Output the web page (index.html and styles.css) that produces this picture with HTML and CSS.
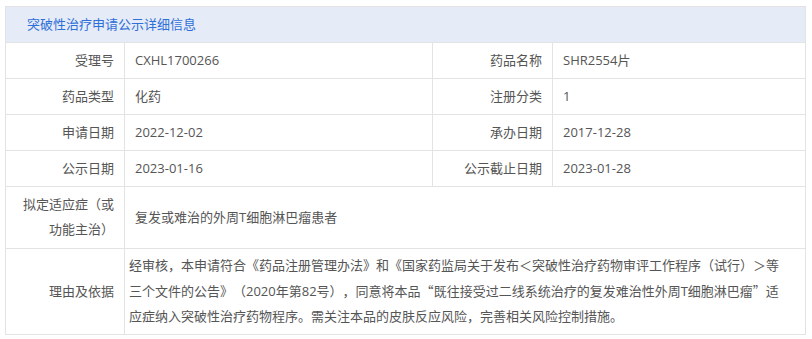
FILE: index.html
```html
<!DOCTYPE html>
<html lang="zh-CN">
<head>
<meta charset="utf-8">
<title>突破性治疗申请公示详细信息</title>
<link rel="stylesheet" href="styles.css">
</head>
<body>
<div class="wrap">
<table class="info">
  <colgroup>
    <col class="c-label"><col class="c-val"><col class="c-label2"><col class="c-val2">
  </colgroup>
  <tr class="head"><th colspan="4">突破性治疗申请公示详细信息</th></tr>
  <tr><td class="lbl">受理号</td><td>CXHL1700266</td><td class="lbl">药品名称</td><td>SHR2554片</td></tr>
  <tr><td class="lbl">药品类型</td><td>化药</td><td class="lbl">注册分类</td><td>1</td></tr>
  <tr><td class="lbl">申请日期</td><td>2022-12-02</td><td class="lbl">承办日期</td><td>2017-12-28</td></tr>
  <tr><td class="lbl">公示日期</td><td>2023-01-16</td><td class="lbl">公示截止日期</td><td>2023-01-28</td></tr>
  <tr class="tall"><td class="lbl">拟定适应症（或功能主治）</td><td colspan="3">复发或难治的外周T细胞淋巴瘤患者</td></tr>
  <tr><td class="lbl">理由及依据</td><td colspan="3" class="long">经审核，本申请符合《药品注册管理办法》和《国家药监局关于发布＜突破性治疗药物审评工作程序（试行）＞等三个文件的公告》（2020年第82号），同意将本品<span class="cjk">“</span>既往接受过二线系统治疗的复发难治性外周T细胞淋巴瘤<span class="cjk">”</span>适应症纳入突破性治疗药物程序。需关注本品的皮肤反应风险，完善相关风险控制措施。</td></tr>
</table>
</div>
</body>
</html>
```
FILE: styles.css
```css
html, body {
  margin: 0;
  padding: 0;
  background: #fff;
}
body {
  font-family: "Open Sans", "Noto Sans CJK SC", sans-serif;
  font-size: 13px;
  color: #555;
  text-spacing-trim: space-all;
}
.wrap {
  padding: 6px 0 0 5px;
}
.info {
  width: 800px;
  table-layout: fixed;
  border-collapse: collapse;
}
.c-label { width: 119px; }
.c-val { width: 308px; }
.c-label2 { width: 120px; }
.c-val2 { width: 253px; }
.info th, .info td {
  border: 1px solid #e3e3e3;
  padding: 4px 10px 5px;
  line-height: 25px;
  height: 26px;
  vertical-align: middle;
  word-break: break-all;
}
.info .head th {
  background: #e6ecf7;
  color: #2f6fd9;
  font-weight: normal;
  text-align: left;
  padding-left: 21px;
}
.info td.lbl {
  text-align: right;
}
.info tr.tall td {
  height: 52px;
}
.info td.long {
  padding-left: 4px;
  padding-right: 14px;
}
.cjk {
  font-family: "Noto Sans CJK SC", sans-serif;
  font-feature-settings: "fwid" 1;
}
```
